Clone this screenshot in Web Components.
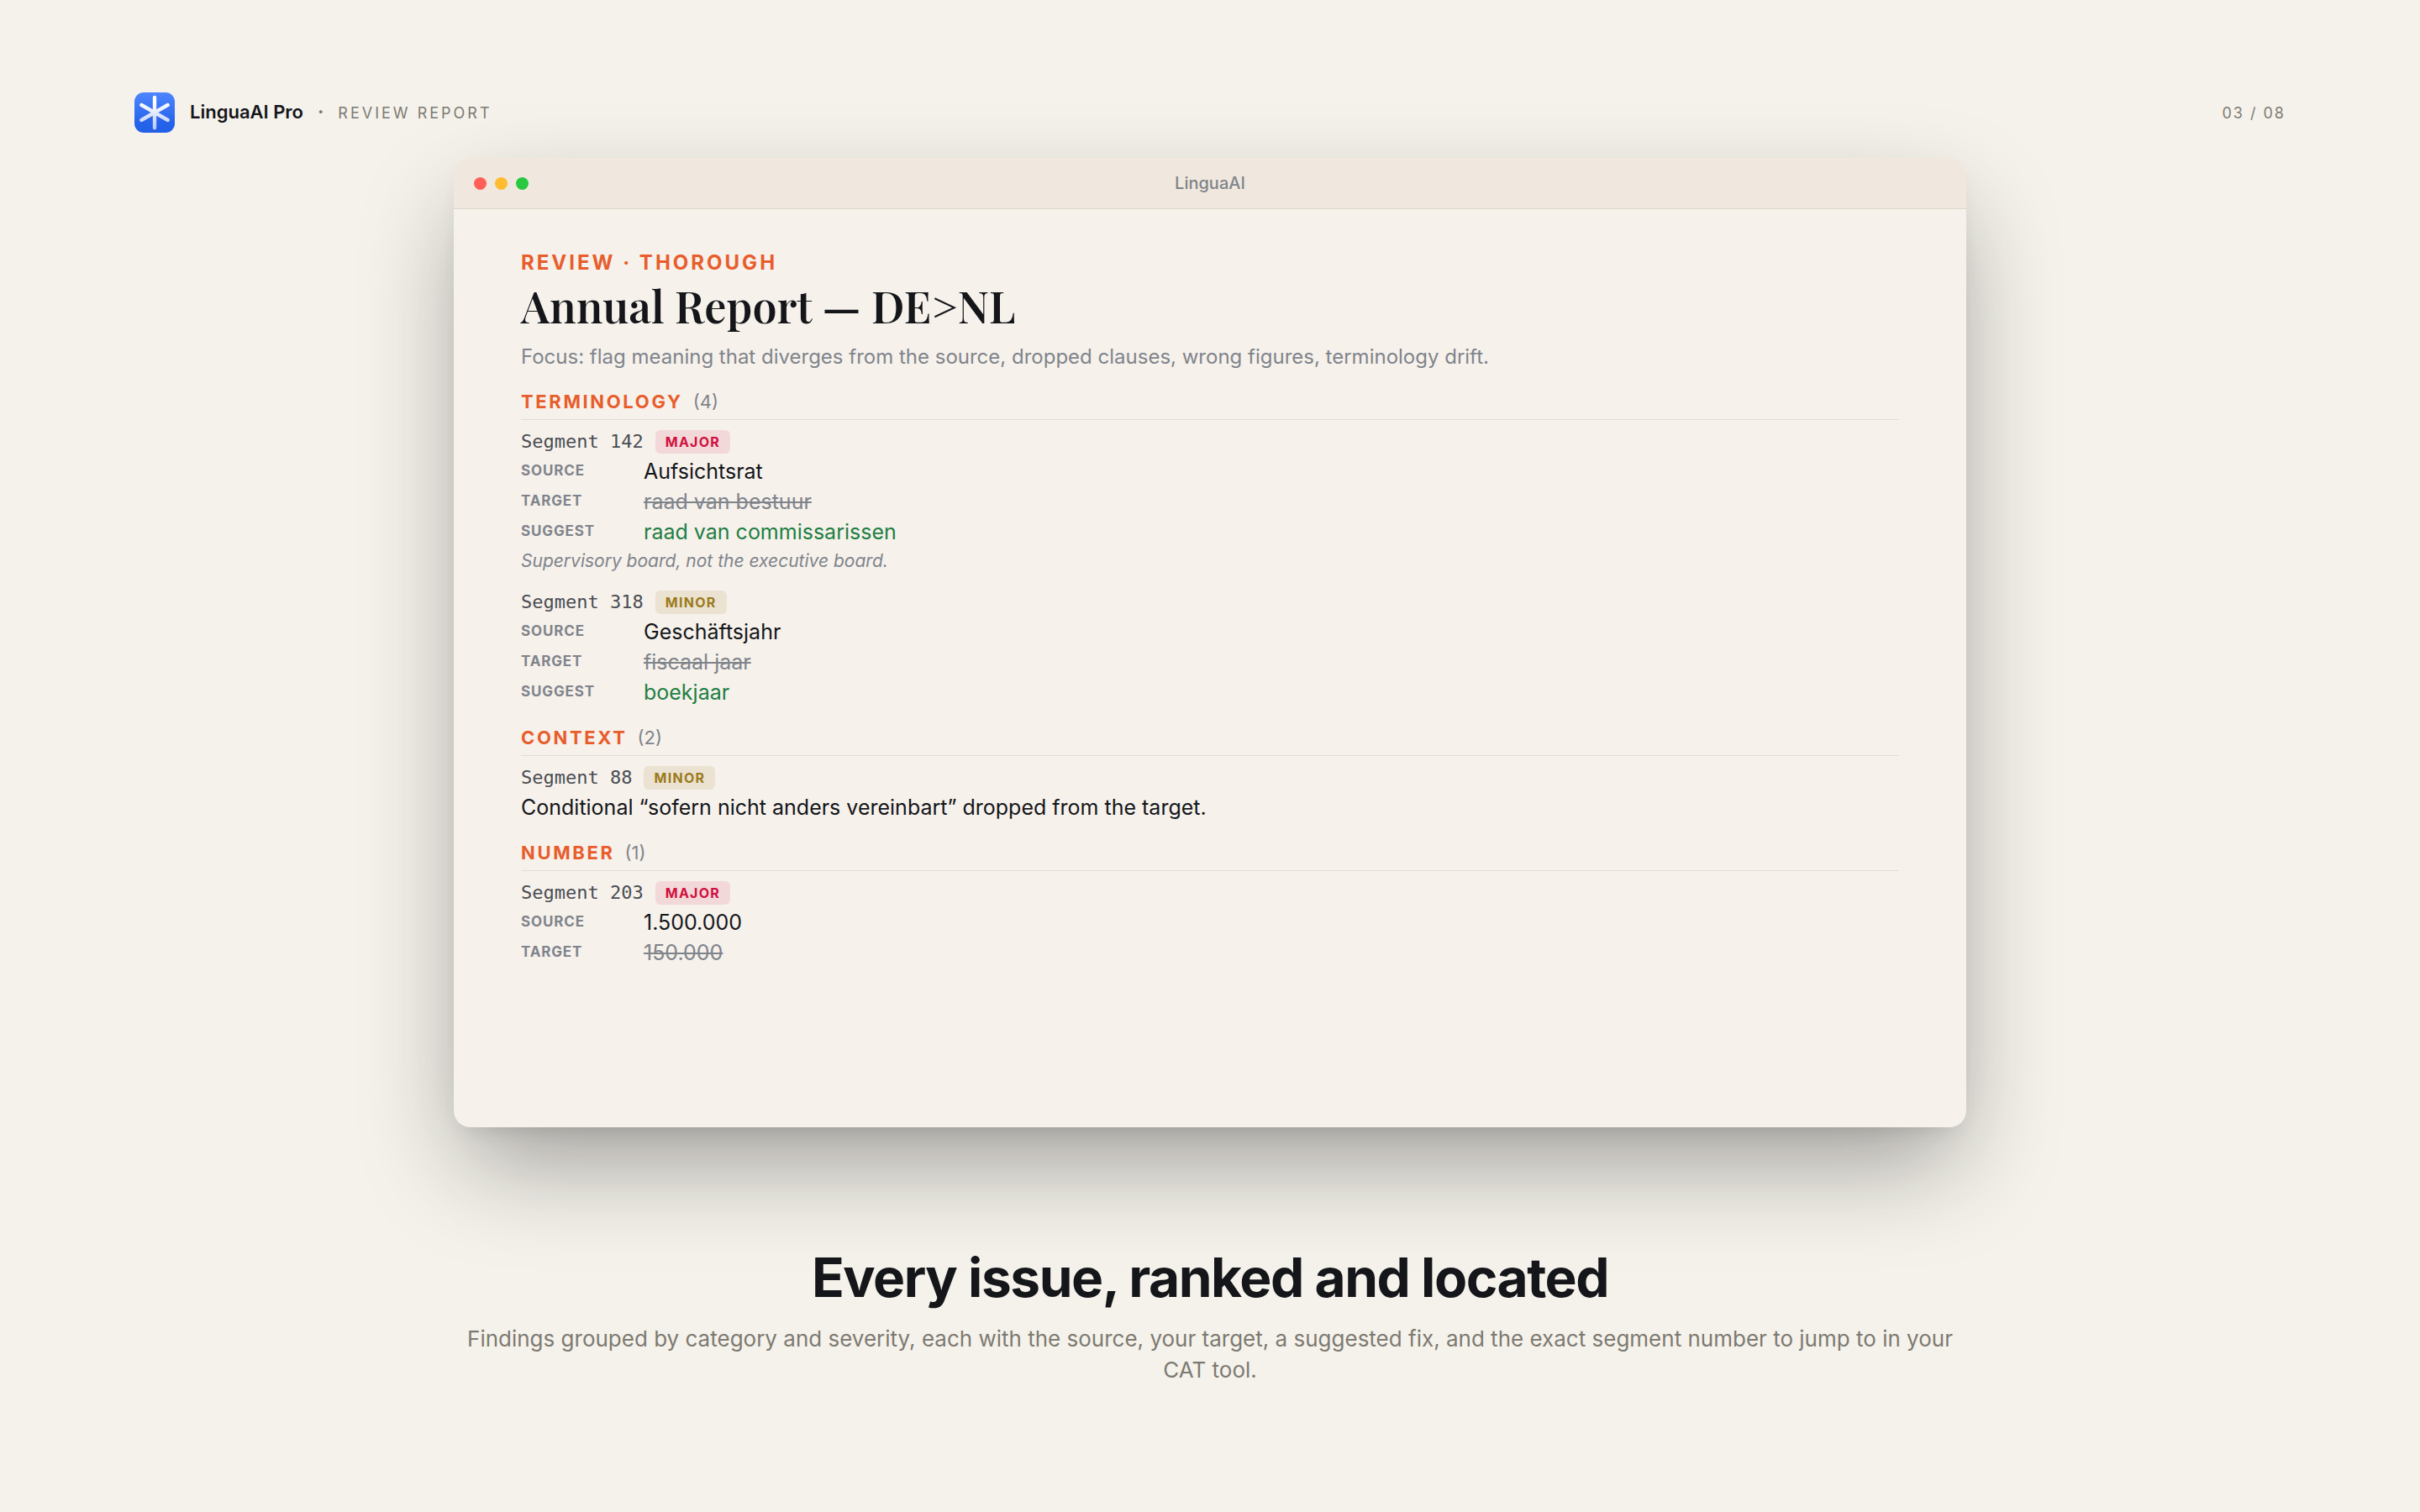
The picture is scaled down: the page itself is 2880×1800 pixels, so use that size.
<!DOCTYPE html>
<html lang="en">
<head>
<meta charset="utf-8">
<meta name="viewport" content="width=device-width, initial-scale=1">
<title>LinguaAI Pro</title>
<style>
  body {
    margin: 0;
    background: #f5f2eb;
    color: #14161a;
    font-family: Inter, "Liberation Sans", sans-serif;
  }
</style>
</head>
<body>
<promo-slide>
  <slide-header slot="header" brand="LinguaAI Pro" section="Review Report" page="03 / 08"></slide-header>

  <app-window caption="LinguaAI">
    <report-head kicker="Review · Thorough">
      <span slot="title">Annual Report — DE&gt;NL</span>
      Focus: flag meaning that diverges from the source, dropped clauses, wrong figures, terminology drift.
    </report-head>

    <issue-group name="Terminology" count="4">
      <issue-item segment="142" severity="major">
        <issue-field label="Source">Aufsichtsrat</issue-field>
        <issue-field label="Target" kind="wrong">raad van bestuur</issue-field>
        <issue-field label="Suggest" kind="fix">raad van commissarissen</issue-field>
        <em slot="note">Supervisory board, not the executive board.</em>
      </issue-item>
      <issue-item segment="318" severity="minor">
        <issue-field label="Source">Geschäftsjahr</issue-field>
        <issue-field label="Target" kind="wrong">fiscaal jaar</issue-field>
        <issue-field label="Suggest" kind="fix">boekjaar</issue-field>
      </issue-item>
    </issue-group>

    <issue-group name="Context" count="2">
      <issue-item segment="88" severity="minor">Conditional “sofern nicht anders vereinbart” dropped from the target.</issue-item>
    </issue-group>

    <issue-group name="Number" count="1">
      <issue-item segment="203" severity="major">
        <issue-field label="Source">1.500.000</issue-field>
        <issue-field label="Target" kind="wrong">150.000</issue-field>
      </issue-item>
    </issue-group>
  </app-window>

  <slide-caption slot="caption">
    <span slot="title">Every issue, ranked and located</span>
    Findings grouped by category and severity, each with the source, your target, a suggested fix, and the exact segment number to jump to in your CAT tool.
  </slide-caption>
</promo-slide>

<script>
  // Attach an open shadow root with the given markup
  function render(element, html) {
    element.attachShadow({ mode: 'open' }).innerHTML = html;
  }

  // Custom Element: the whole slide
  class PromoSlide extends HTMLElement {
    constructor() {
      super();
      render(this, `
        <style>
          :host {
            display: flex;
            flex-direction: column;
            box-sizing: border-box;
            min-height: 100vh;
            padding: 110px 160px 151px;
          }

          main {
            flex: 1;
            display: flex;
            flex-direction: column;
            width: 100%;
            max-width: 1800px;
            margin: 30px auto 0;
          }
        </style>
        <slot name="header"></slot>
        <main>
          <slot></slot>
          <slot name="caption"></slot>
        </main>
      `);
    }
  }

  // Custom Element: logo mark
  class BrandMark extends HTMLElement {
    constructor() {
      super();
      render(this, `
        <style>
          :host { display: block; width: 48px; height: 48px; }
          svg { display: block; }
        </style>
        <svg width="48" height="48" viewBox="0 0 48 48" aria-hidden="true">
          <defs>
            <linearGradient id="tile" x1="0" y1="0" x2="0" y2="1">
              <stop offset="0" stop-color="#4f86ff"/>
              <stop offset="0.75" stop-color="#2563eb"/>
              <stop offset="1" stop-color="#2360e8"/>
            </linearGradient>
            <linearGradient id="ray" gradientUnits="userSpaceOnUse" x1="0" y1="4" x2="0" y2="44">
              <stop offset="0.2" stop-color="#ffffff"/>
              <stop offset="1" stop-color="#b4c8fa"/>
            </linearGradient>
          </defs>
          <rect width="48" height="48" rx="11" fill="url(#tile)"/>
          <g fill="none" stroke-width="4.4" stroke-linecap="round">
            <path d="M24 7V43.5M8.6 16 39.6 34M39.6 16 8.6 34" stroke="#1746b8" stroke-opacity=".35"/>
            <path d="M24 6V42.3M8.3 15 39.7 33M39.7 15 8.3 33" stroke="url(#ray)"/>
          </g>
        </svg>
      `);
    }
  }

  // Custom Element: top line with brand and page number
  class SlideHeader extends HTMLElement {
    constructor() {
      super();
      render(this, `
        <style>
          :host { display: block; }

          header {
            display: flex;
            align-items: center;
            gap: 18px;
            color: #7d7a72;
            font-size: 18px;
            line-height: 28px;
          }

          .line {
            flex: 1;
            display: flex;
            align-items: baseline;
            gap: 17px;
          }

          strong {
            color: #14161a;
            font-size: 22px;
            font-weight: 600;
          }

          .dot {
            font-size: 22px;
            font-weight: 700;
          }

          .section {
            letter-spacing: 3px;
            text-transform: uppercase;
          }

          .page {
            margin-left: auto;
            letter-spacing: 2px;
          }
        </style>
        <header>
          <brand-mark></brand-mark>
          <div class="line">
            <strong>${this.getAttribute('brand')}</strong>
            <span class="dot">·</span>
            <span class="section">${this.getAttribute('section')}</span>
            <span class="page">${this.getAttribute('page')}</span>
          </div>
        </header>
      `);
    }
  }

  // Custom Element: desktop window with traffic lights
  class AppWindow extends HTMLElement {
    constructor() {
      super();
      render(this, `
        <style>
          :host {
            flex: 1;
            display: flex;
            flex-direction: column;
            overflow: hidden;
            border-radius: 20px;
            background: #f6f1eb;
            box-shadow: 0 52px 120px -14px rgba(20, 22, 26, 0.4), 0 12px 24px -12px rgba(20, 22, 26, 0.12);
          }

          .bar {
            display: grid;
            grid-template-columns: 1fr auto 1fr;
            align-items: center;
            height: 60px;
            padding: 0 24px;
            border-bottom: 1px solid #dcd6c8;
            background: #f0e8de;
            color: #7f848b;
            font-size: 20px;
            font-weight: 500;
          }

          .lights {
            display: flex;
            gap: 10px;
          }

          .lights i {
            width: 15px;
            height: 15px;
            border-radius: 50%;
            background: #ff5f57;
          }

          .lights i:nth-child(2) { background: #febc2e; }
          .lights i:nth-child(3) { background: #28c840; }

          .body {
            display: flex;
            flex-direction: column;
            gap: 22px;
            padding: 50px 80px;
          }
        </style>
        <div class="bar">
          <span class="lights"><i></i><i></i><i></i></span>
          <span>${this.getAttribute('caption')}</span>
        </div>
        <div class="body"><slot></slot></div>
      `);
    }
  }

  // Custom Element: report title block
  class ReportHead extends HTMLElement {
    constructor() {
      super();
      render(this, `
        <style>
          :host { display: block; }

          .kicker {
            margin: 0;
            color: #e85d2c;
            font-size: 24px;
            font-weight: 700;
            line-height: 28px;
            letter-spacing: 3px;
            text-transform: uppercase;
          }

          h1 {
            margin: 5px 0 12px;
            font-family: "Playfair Display", "Liberation Serif", serif;
            font-size: 52px;
            font-weight: 600;
            line-height: 64px;
          }

          .focus {
            margin: 0;
            color: #7f848b;
            font-size: 24px;
            line-height: 34px;
          }
        </style>
        <p class="kicker">${this.getAttribute('kicker')}</p>
        <h1><slot name="title"></slot></h1>
        <p class="focus"><slot></slot></p>
      `);
    }
  }

  // Custom Element: issues of one category
  class IssueGroup extends HTMLElement {
    constructor() {
      super();
      render(this, `
        <style>
          :host { display: block; }

          h2 {
            display: flex;
            gap: 12px;
            margin: 0 0 12px;
            padding-bottom: 7px;
            border-bottom: 1px solid #e2ddd6;
            color: #e85d2c;
            font-size: 22px;
            font-weight: 700;
            line-height: 28px;
          }

          .name {
            letter-spacing: 0.12em;
            text-transform: uppercase;
          }

          .count {
            color: #7f848b;
            font-weight: 400;
          }

          .list {
            display: flex;
            flex-direction: column;
            gap: 18px;
          }
        </style>
        <h2>
          <span class="name">${this.getAttribute('name')}</span>
          <span class="count">(${this.getAttribute('count')})</span>
        </h2>
        <div class="list"><slot></slot></div>
      `);
    }
  }

  // Custom Element: one finding in a segment
  class IssueItem extends HTMLElement {
    constructor() {
      super();
      render(this, `
        <style>
          :host {
            display: block;
            font-size: 25px;
            line-height: 36px;
          }

          .top {
            display: flex;
            align-items: center;
            gap: 14px;
            margin-bottom: 3px;
            line-height: 28px;
          }

          .segment {
            color: #4a4d53;
            font-family: "DejaVu Sans Mono", monospace;
            font-size: 22px;
          }

          .badge {
            padding: 0 12px;
            border-radius: 6px;
            font-size: 16px;
            font-weight: 700;
            letter-spacing: 0.08em;
            text-transform: uppercase;
          }

          .major {
            background: #f3d8d9;
            color: #d0103f;
          }

          .minor {
            background: #ebe2d1;
            color: #9c7a1c;
          }

          slot[name="note"] {
            display: block;
            color: #7f848b;
            font-size: 21px;
            line-height: 34px;
          }
        </style>
        <div class="top">
          <span class="segment">Segment ${this.getAttribute('segment')}</span>
          <span class="badge ${this.getAttribute('severity')}">${this.getAttribute('severity')}</span>
        </div>
        <slot></slot>
        <slot name="note"></slot>
      `);
    }
  }

  // Custom Element: label and value row
  class IssueField extends HTMLElement {
    constructor() {
      super();
      render(this, `
        <style>
          :host {
            display: grid;
            grid-template-columns: 130px 1fr;
            column-gap: 16px;
          }

          .label {
            color: #7f848b;
            font-size: 17px;
            font-weight: 700;
            line-height: 34px;
            letter-spacing: 0.05em;
            text-transform: uppercase;
          }

          :host([kind="wrong"]) .value {
            color: #7f848b;
            text-decoration: line-through;
          }

          :host([kind="fix"]) .value { color: #1f7f43; }
        </style>
        <span class="label">${this.getAttribute('label')}</span>
        <span class="value"><slot></slot></span>
      `);
    }
  }

  // Custom Element: headline under the window
  class SlideCaption extends HTMLElement {
    constructor() {
      super();
      render(this, `
        <style>
          :host {
            display: block;
            margin-top: 143px;
            text-align: center;
          }

          h2 {
            margin: 0 0 18px;
            font-size: 64px;
            font-weight: 700;
            line-height: 72px;
            letter-spacing: -0.023em;
          }

          p {
            margin: 0;
            color: #7d7a72;
            font-size: 26px;
            line-height: 37px;
          }
        </style>
        <h2><slot name="title"></slot></h2>
        <p><slot></slot></p>
      `);
    }
  }

  customElements.define('brand-mark', BrandMark);
  customElements.define('promo-slide', PromoSlide);
  customElements.define('slide-header', SlideHeader);
  customElements.define('app-window', AppWindow);
  customElements.define('report-head', ReportHead);
  customElements.define('issue-group', IssueGroup);
  customElements.define('issue-item', IssueItem);
  customElements.define('issue-field', IssueField);
  customElements.define('slide-caption', SlideCaption);
</script>
</body>
</html>
